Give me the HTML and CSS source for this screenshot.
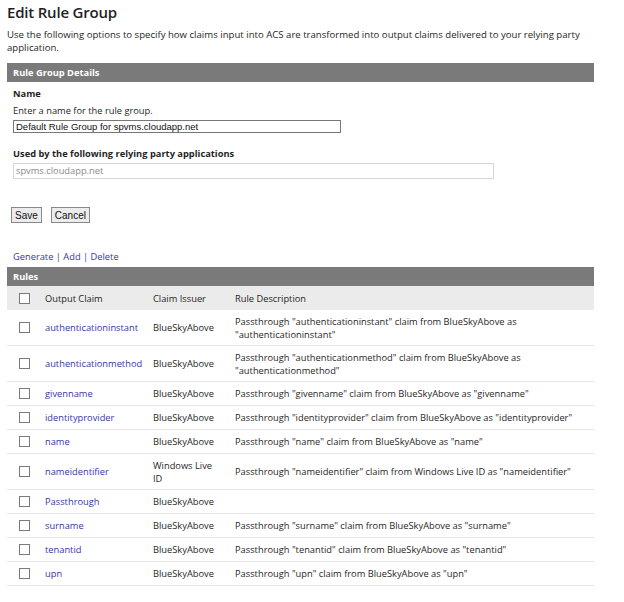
FILE: index.html
```html
<!DOCTYPE html>
<html>
<head>
<meta charset="utf-8">
<link rel="stylesheet" href="styles.css">
</head>
<body>
<div class="page">
  <h1 class="title">Edit Rule Group</h1>
  <p class="intro">Use the following options to specify how claims input into ACS are transformed into output claims delivered to your relying party application.</p>

  <div class="bar">Rule Group Details</div>
  <div class="field">
    <div class="label">Name</div>
    <div class="hint">Enter a name for the rule group.</div>
    <input class="text-input" type="text" value="Default Rule Group for spvms.cloudapp.net">
  </div>
  <div class="field field-used">
    <div class="label">Used by the following relying party applications</div>
    <div class="readonly">spvms.cloudapp.net</div>
  </div>

  <div class="buttons">
    <button class="btn">Save</button>
    <button class="btn">Cancel</button>
  </div>

  <div class="actions"><a href="#">Generate</a> | <a href="#">Add</a> | <a href="#">Delete</a></div>

  <div class="bar bar-rules">Rules</div>
  <table class="rules">
    <colgroup>
      <col class="c-check"><col class="c-claim"><col class="c-issuer"><col class="c-desc">
    </colgroup>
    <thead>
      <tr><th><span class="cb"></span></th><th>Output Claim</th><th>Claim Issuer</th><th>Rule Description</th></tr>
    </thead>
    <tbody>
      <tr class="tall"><td><span class="cb"></span></td><td><a href="#">authenticationinstant</a></td><td>BlueSkyAbove</td><td>Passthrough "authenticationinstant" claim from BlueSkyAbove as "authenticationinstant"</td></tr>
      <tr class="tall"><td><span class="cb"></span></td><td><a href="#">authenticationmethod</a></td><td>BlueSkyAbove</td><td>Passthrough "authenticationmethod" claim from BlueSkyAbove as "authenticationmethod"</td></tr>
      <tr><td><span class="cb"></span></td><td><a href="#">givenname</a></td><td>BlueSkyAbove</td><td>Passthrough "givenname" claim from BlueSkyAbove as "givenname"</td></tr>
      <tr><td><span class="cb"></span></td><td><a href="#">identityprovider</a></td><td>BlueSkyAbove</td><td>Passthrough "identityprovider" claim from BlueSkyAbove as "identityprovider"</td></tr>
      <tr><td><span class="cb"></span></td><td><a href="#">name</a></td><td>BlueSkyAbove</td><td>Passthrough "name" claim from BlueSkyAbove as "name"</td></tr>
      <tr class="tall"><td><span class="cb"></span></td><td><a href="#">nameidentifier</a></td><td>Windows Live ID</td><td>Passthrough "nameidentifier" claim from Windows Live ID as "nameidentifier"</td></tr>
      <tr><td><span class="cb"></span></td><td><a href="#">Passthrough</a></td><td>BlueSkyAbove</td><td></td></tr>
      <tr><td><span class="cb"></span></td><td><a href="#">surname</a></td><td>BlueSkyAbove</td><td>Passthrough "surname" claim from BlueSkyAbove as "surname"</td></tr>
      <tr><td><span class="cb"></span></td><td><a href="#">tenantid</a></td><td>BlueSkyAbove</td><td>Passthrough "tenantid" claim from BlueSkyAbove as "tenantid"</td></tr>
      <tr><td><span class="cb"></span></td><td><a href="#">upn</a></td><td>BlueSkyAbove</td><td>Passthrough "upn" claim from BlueSkyAbove as "upn"</td></tr>
    </tbody>
  </table>
</div>
</body>
</html>
```

FILE: styles.css
```css
html, body {
  margin: 0;
  padding: 0;
  background: #fff;
}
.page {
  width: 587px;
  padding: 0 0 0 7px;
  font-family: "Open Sans", "Noto Sans", sans-serif;
  font-size: 9.3px;
  color: #1f1f1f;
}
.title {
  font-size: 15px;
  font-weight: 600;
  letter-spacing: -0.2px;
  margin: 0;
  padding-top: 2px;
  line-height: 20px;
  color: #1f1f1f;
}
.intro {
  margin: 6px 0 0 0;
  font-size: 9.6px;
  line-height: 13px;
}
.bar {
  background: #7a7a7a;
  color: #fff;
  font-weight: 700;
  height: 19px;
  line-height: 19px;
  padding-left: 6px;
  margin-top: 9px;
}
.field {
  padding-left: 6px;
  margin-top: 5px;
}
.label {
  font-weight: 700;
  line-height: 14px;
  color: #1f1f1f;
}
.hint {
  line-height: 13px;
  margin-top: 3px;
}
.text-input {
  display: block;
  box-sizing: border-box;
  margin: 3px 0 0 0;
  width: 328px;
  height: 13px;
  border: 1px solid #777;
  padding: 0 0 0 2px;
  font-family: "Liberation Sans", Arial, sans-serif;
  font-size: 9.5px;
  color: #111;
}
.field-used {
  margin-top: 14px;
}
.readonly {
  box-sizing: border-box;
  margin: 2px 0 0 0;
  width: 481px;
  height: 16px;
  line-height: 14px;
  border: 1px solid #d6d6d6;
  padding-left: 2px;
  color: #8a8a8a;
}
.buttons {
  margin-top: 28px;
  display: flex;
  gap: 9px;
  padding-left: 4px;
}
.btn {
  font-family: "Liberation Sans", Arial, sans-serif;
  font-size: 10px;
  height: 16px;
  padding: 0 3px;
  background: #ececec;
  border: 1px solid #888;
  border-radius: 0;
  color: #111;
}
.actions {
  margin-top: 27px;
  padding-left: 6px;
  line-height: 13px;
  color: #3a3a9a;
}
.actions a, .rules a {
  color: #3636a6;
  text-decoration: none;
}
.bar-rules {
  margin-top: 4px;
}
.rules {
  width: 587px;
  border-collapse: collapse;
  table-layout: fixed;
}
.c-check { width: 38px; }
.c-claim { width: 108px; }
.c-issuer { width: 82px; }
.rules th {
  background: #ebebeb;
  font-weight: 400;
  text-align: left;
  height: 24px;
  padding: 0;
  vertical-align: middle;
}
.rules td {
  height: 23px;
  padding: 0;
  border-bottom: 1px solid #e6e6e6;
  vertical-align: middle;
  line-height: 13px;
}
.rules td:nth-child(3) {
  padding-right: 14px;
}
.rules tr.tall td {
  height: 35px;
}
.rules th:first-child, .rules td:first-child {
  padding-left: 12px;
}
.cb {
  display: block;
  width: 9px;
  height: 9px;
  border: 1px solid #7a7a7a;
  background: #fff;
}
```
